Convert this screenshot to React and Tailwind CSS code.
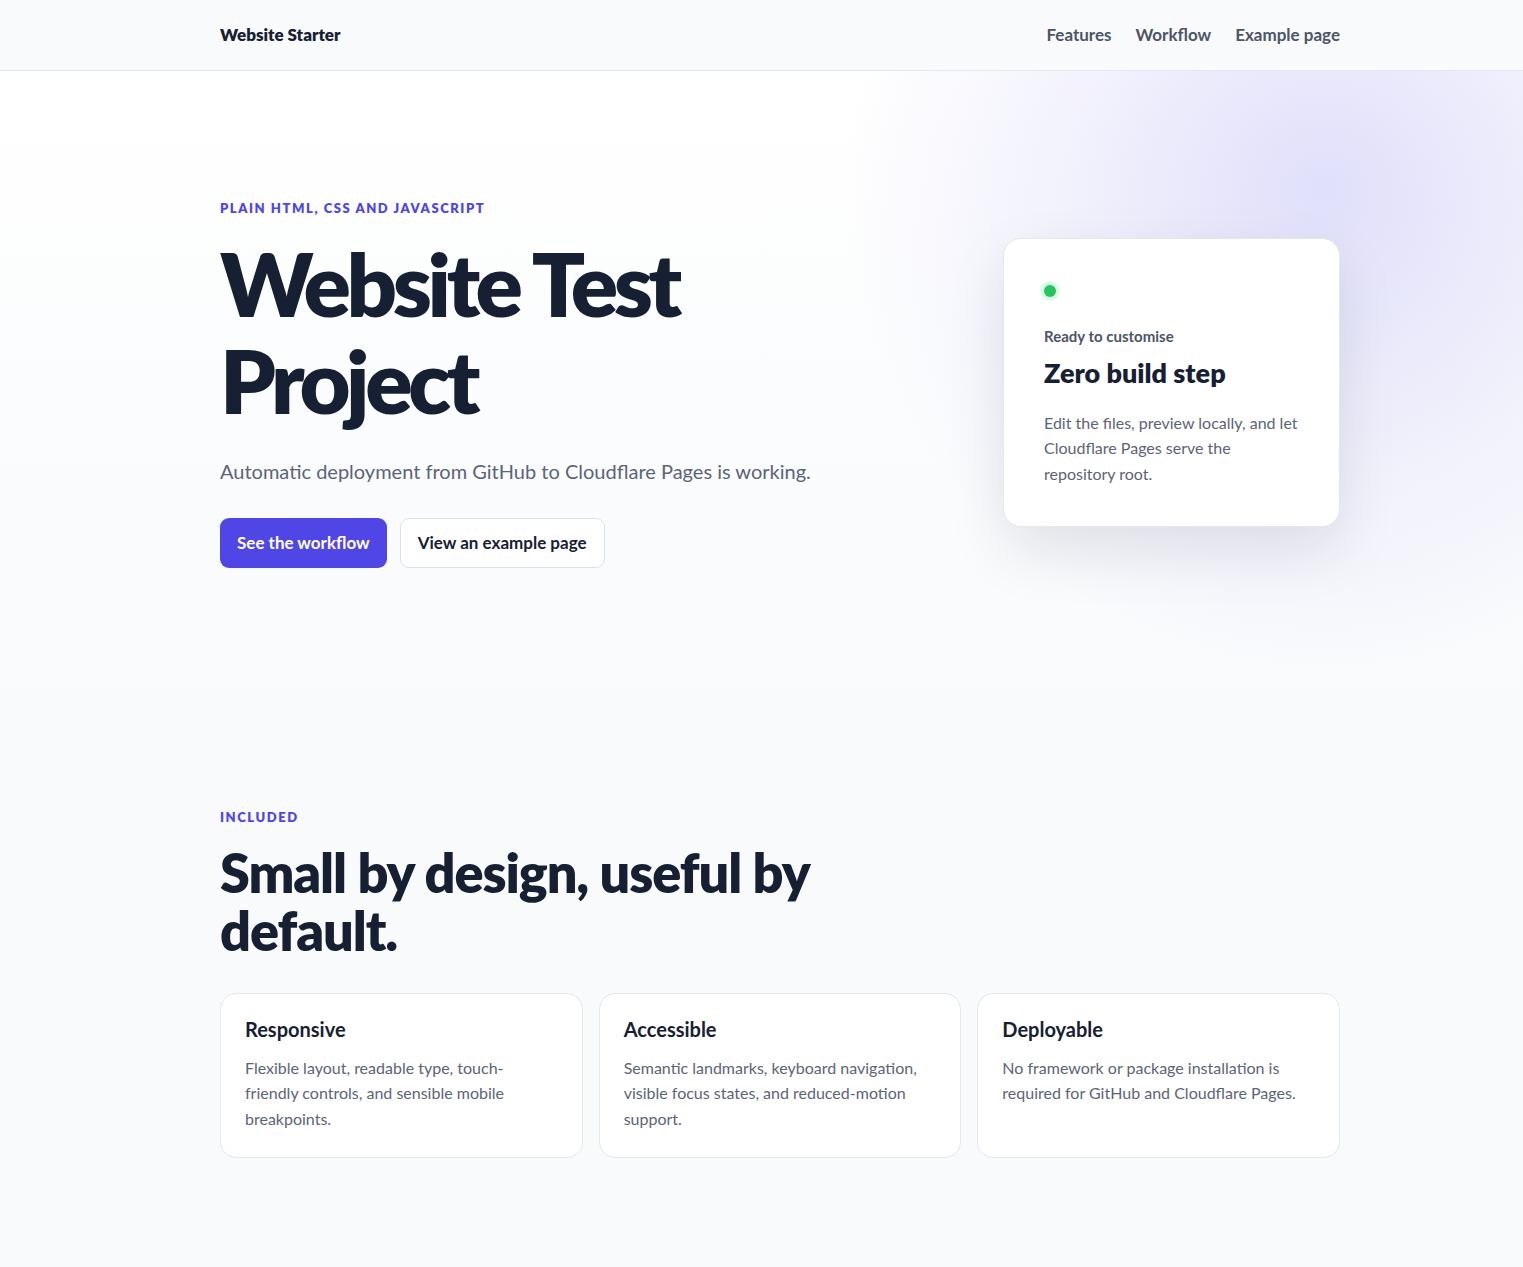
import React from "react";

function Feature({ title, children }) {
  return (
    <div className="rounded-[16px] border border-[#e2e8f0] bg-white px-6 pt-[22px] pb-[26px]">
      <h3 className="text-[20px] font-bold leading-[1.3] text-[#172033]">{title}</h3>
      <p className="mt-[13px] max-w-[300px] text-[16px] leading-[1.6] text-[#5b6478]">{children}</p>
    </div>
  );
}

export default function App() {
  return (
    <div className="min-h-screen bg-[#f8fafc] font-['Lato',sans-serif] text-[#172033]">
      <header className="h-[71px] border-b border-[#e2e8f0] bg-[#f8fafc]">
        <div className="ml-[220px] flex h-full w-[1120px] items-center justify-between">
          <a className="text-[17px] font-extrabold text-[#172033]">Website Starter</a>
          <nav className="flex gap-6 text-[17px] font-bold text-[#4b5567]">
            <a>Features</a>
            <a>Workflow</a>
            <a>Example page</a>
          </nav>
        </div>
      </header>

      <section className="bg-[radial-gradient(circle_at_87%_19%,rgba(79,70,229,0.17),rgba(79,70,229,0.06)_18rem,transparent_30rem),linear-gradient(180deg,#ffffff,#f8fafc)] pt-[127px] pb-[128px]">
        <div className="ml-[220px] flex w-[1120px] items-center justify-between">
          <div>
            <p className="text-[13px] font-extrabold uppercase leading-[20px] tracking-[0.12em] text-[#4f46e5]">
              Plain HTML, CSS and JavaScript
            </p>
            <h1 className="mt-[17px] text-[88px] font-extrabold leading-[1.1] tracking-[-0.05em] text-[#172033]">
              Website Test
              <br />
              Project
            </h1>
            <p className="mt-[26px] text-[20px] leading-[32px] text-[#5b6478]">
              Automatic deployment from GitHub to Cloudflare Pages is working.
            </p>
            <div className="mt-[31px] flex gap-[13px]">
              <a className="flex h-[50px] items-center rounded-[9px] bg-[#4f46e5] px-[17px] text-[17px] font-bold text-white">
                See the workflow
              </a>
              <a className="flex h-[50px] items-center rounded-[9px] border border-[#dbe2ea] bg-white px-[17px] text-[17px] font-bold text-[#172033]">
                View an example page
              </a>
            </div>
          </div>

          <div className="w-[337px] rounded-[18px] border border-[#e2e8f0] bg-white px-10 pt-[46px] pb-[40px] shadow-[0_24px_60px_rgba(15,23,42,0.10)]">
            <span className="block h-3 w-3 rounded-full bg-[#22c55e] shadow-[0_0_0_4px_#dcfce7]"></span>
            <p className="mt-[29px] text-[15px] font-bold leading-[20px] text-[#4b5567]">Ready to customise</p>
            <h2 className="mt-[11px] text-[27px] font-extrabold leading-[1.2] text-[#172033]">Zero build step</h2>
            <p className="mt-[20px] text-[16px] leading-[1.6] text-[#5b6478]">
              Edit the files, preview locally, and let Cloudflare Pages serve the repository root.
            </p>
          </div>
        </div>
      </section>

      <section className="pt-[111px] pb-[110px]">
        <div className="ml-[220px] w-[1120px]">
          <p className="text-[13px] font-extrabold uppercase leading-[20px] tracking-[0.12em] text-[#4f46e5]">Included</p>
          <h2 className="mt-[17px] max-w-[640px] text-[54px] font-extrabold leading-[58px] tracking-[-0.02em] text-[#172033]">
            Small by design, useful by default.
          </h2>
          <div className="mt-[33px] grid grid-cols-3 gap-4">
            <Feature title="Responsive">
              Flexible layout, readable type, touch-friendly controls, and sensible mobile breakpoints.
            </Feature>
            <Feature title="Accessible">
              Semantic landmarks, keyboard navigation, visible focus states, and reduced-motion support.
            </Feature>
            <Feature title="Deployable">
              No framework or package installation is required for GitHub and Cloudflare Pages.
            </Feature>
          </div>
        </div>
      </section>
    </div>
  );
}
